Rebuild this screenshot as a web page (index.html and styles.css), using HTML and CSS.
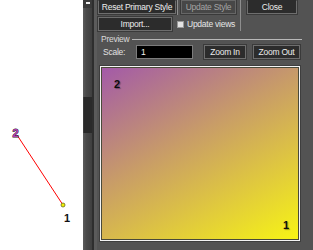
FILE: index.html
```html
<!DOCTYPE html>
<html>
<head>
<meta charset="utf-8">
<link rel="stylesheet" href="styles.css">
</head>
<body>
<div class="app">
  <div class="canvas">
    <svg width="83" height="250" viewBox="0 0 83 250">
      <line x1="17" y1="135" x2="63" y2="205" stroke="#ff0000" stroke-width="1"/>
      <circle cx="63" cy="205" r="2" fill="#f2f000" stroke="#6a6a20" stroke-width="0.8"/>
      <text x="12.5" y="137" class="pt-label pt-2">2</text>
      <text x="64" y="222" class="pt-label pt-1">1</text>
    </svg>
  </div>
  <div class="scrollbar">
    <div class="arrow"><span class="arrow-glyph"></span></div>
    <div class="track"><div class="thumb"></div></div>
  </div>
  <div class="gutter"></div>
  <div class="panel">
    <div class="top">
      <div class="left-col">
        <div class="row1">
          <button class="btn reset">Reset Primary Style</button>
          <span class="vsep"></span>
          <button class="btn disabled update">Update Style</button>
        </div>
        <div class="row2">
          <button class="btn import">Import...</button>
          <label class="check"><span class="box"></span>Update views</label>
        </div>
      </div>
      <div class="right-col">
        <button class="btn close">Close</button>
      </div>
    </div>
    <div class="group-title"><span class="group-name">Preview</span><span class="rule"></span></div>
    <div class="scale-row">
      <span class="scale-label">Scale:</span>
      <div class="input">1</div>
      <button class="btn zoom-in">Zoom In</button>
      <button class="btn zoom-out">Zoom Out</button>
    </div>
    <div class="preview">
      <div class="grad">
        <span class="num n2">2</span>
        <span class="num n1">1</span>
      </div>
    </div>
  </div>
</div>
</body>
</html>
```

FILE: styles.css
```css
* { box-sizing: border-box; }
html, body { margin: 0; padding: 0; background: #fff; }
.app {
  display: flex;
  width: 313px;
  height: 250px;
  overflow: hidden;
  font-family: "Liberation Sans", Arial, sans-serif;
  font-size: 8.5px;
  letter-spacing: -0.25px;
  color: #e2e2e2;
}
.canvas { width: 83px; flex: none; background: #fff; }
.canvas svg { display: block; }
.pt-label { font-family: "Liberation Sans", Arial, sans-serif; font-weight: bold; font-size: 11px; letter-spacing: 0; }
.pt-2 { fill: #b43cb4; stroke: #1a1a1a; stroke-width: 0.9px; paint-order: stroke; }
.pt-1 { fill: #111; }

.scrollbar {
  width: 9px;
  flex: none;
  display: flex;
  flex-direction: column;
  background: linear-gradient(to right, #5c5c5c, #4a4a4a 35%, #3f3f3f);
}
.arrow { height: 8px; background: #3a3a3a; display: flex; justify-content: center; padding-top: 2px; }
.arrow-glyph { width: 4px; height: 2px; background: #f0f0f0; }
.track { flex: 1; padding-top: 89px; }
.thumb { height: 36px; background: #2a2a2a; border-left: 1px solid #3c3c3c; }
.gutter {
  width: 5px;
  flex: none;
  background: linear-gradient(to right, #2e2e2e 0 2px, #5b5b5b 2px);
}

.panel {
  width: 216px;
  flex: none;
  background: #535353;
  display: flex;
  flex-direction: column;
}
.btn {
  font: inherit;
  letter-spacing: inherit;
  color: #ececec;
  background: #2c2c2c;
  border: 1px solid #6e6e6e;
  box-shadow: 0 0 0 1px #3a3a3a;
  padding: 0;
  margin: 0;
  display: flex;
  align-items: center;
  justify-content: center;
}
.btn.disabled { background: #474747; color: #a4a4a4; border-color: #666; }

.top { display: flex; padding-bottom: 4px; }
.left-col { width: 143px; display: flex; flex-direction: column; gap: 3px; }
.row1 { display: flex; height: 14px; }
.reset { width: 78px; height: 14px; margin-left: 1px; border-top-color: #2c2c2c; }
.vsep { width: 1px; height: 15px; margin-left: 1px; margin-right: 3px; background: #8e8e8e; }
.update { width: 55px; height: 14px; border-top-color: #474747; }
.row2 { display: flex; height: 14px; align-items: center; }
.import { width: 74px; height: 14px; margin-left: 1px; }
.check { display: flex; align-items: center; margin-left: 5px; color: #e6e6e6; }
.box { width: 7px; height: 7px; background: #e4e4e4; border: 1px solid #999; margin-right: 3px; }
.right-col { border-left: 1px solid #8e8e8e; padding-left: 6px; }
.close { width: 50px; height: 14px; border-top-color: #2c2c2c; }

.group-title { display: flex; align-items: center; height: 8px; padding-left: 4px; color: #dadada; }
.rule { flex: none; width: 170px; height: 1px; background: #b8b8b8; margin-left: 3px; }

.scale-row { display: flex; align-items: center; height: 14px; margin-top: 2px; }
.scale-label { margin-left: 6px; width: 33px; }
.input {
  width: 57px; height: 14px;
  background: #000;
  border: 1px solid #7c7c7c;
  color: #f0f0f0;
  padding-left: 4px;
  line-height: 12px;
}
.zoom-in { width: 42px; height: 14px; margin-left: 11px; }
.zoom-out { width: 47px; height: 14px; margin-left: 7px; }

.preview {
  margin-top: 7px;
  margin-left: 3px;
  width: 200px;
  height: 175px;
  border: 1px solid #f4f4f4;
  box-shadow: 0 0 0 1px #3e3e3e;
}
.grad {
  position: relative;
  width: 100%;
  height: 100%;
  border: 1px solid #4a4a3a;
  background: linear-gradient(150deg, #a35aa8 0%, #c89c68 42%, #f7f415 100%);
}
.num {
  position: absolute;
  font-family: "Liberation Sans", Arial, sans-serif;
  font-weight: bold;
  font-size: 11px;
  letter-spacing: 0;
  color: #0d0d0d;
  text-shadow: 1px 1px 1px rgba(0,0,0,0.35);
  line-height: 1;
}
.n2 { left: 12px; top: 11px; }
.n1 { left: 181px; top: 152px; }
```
